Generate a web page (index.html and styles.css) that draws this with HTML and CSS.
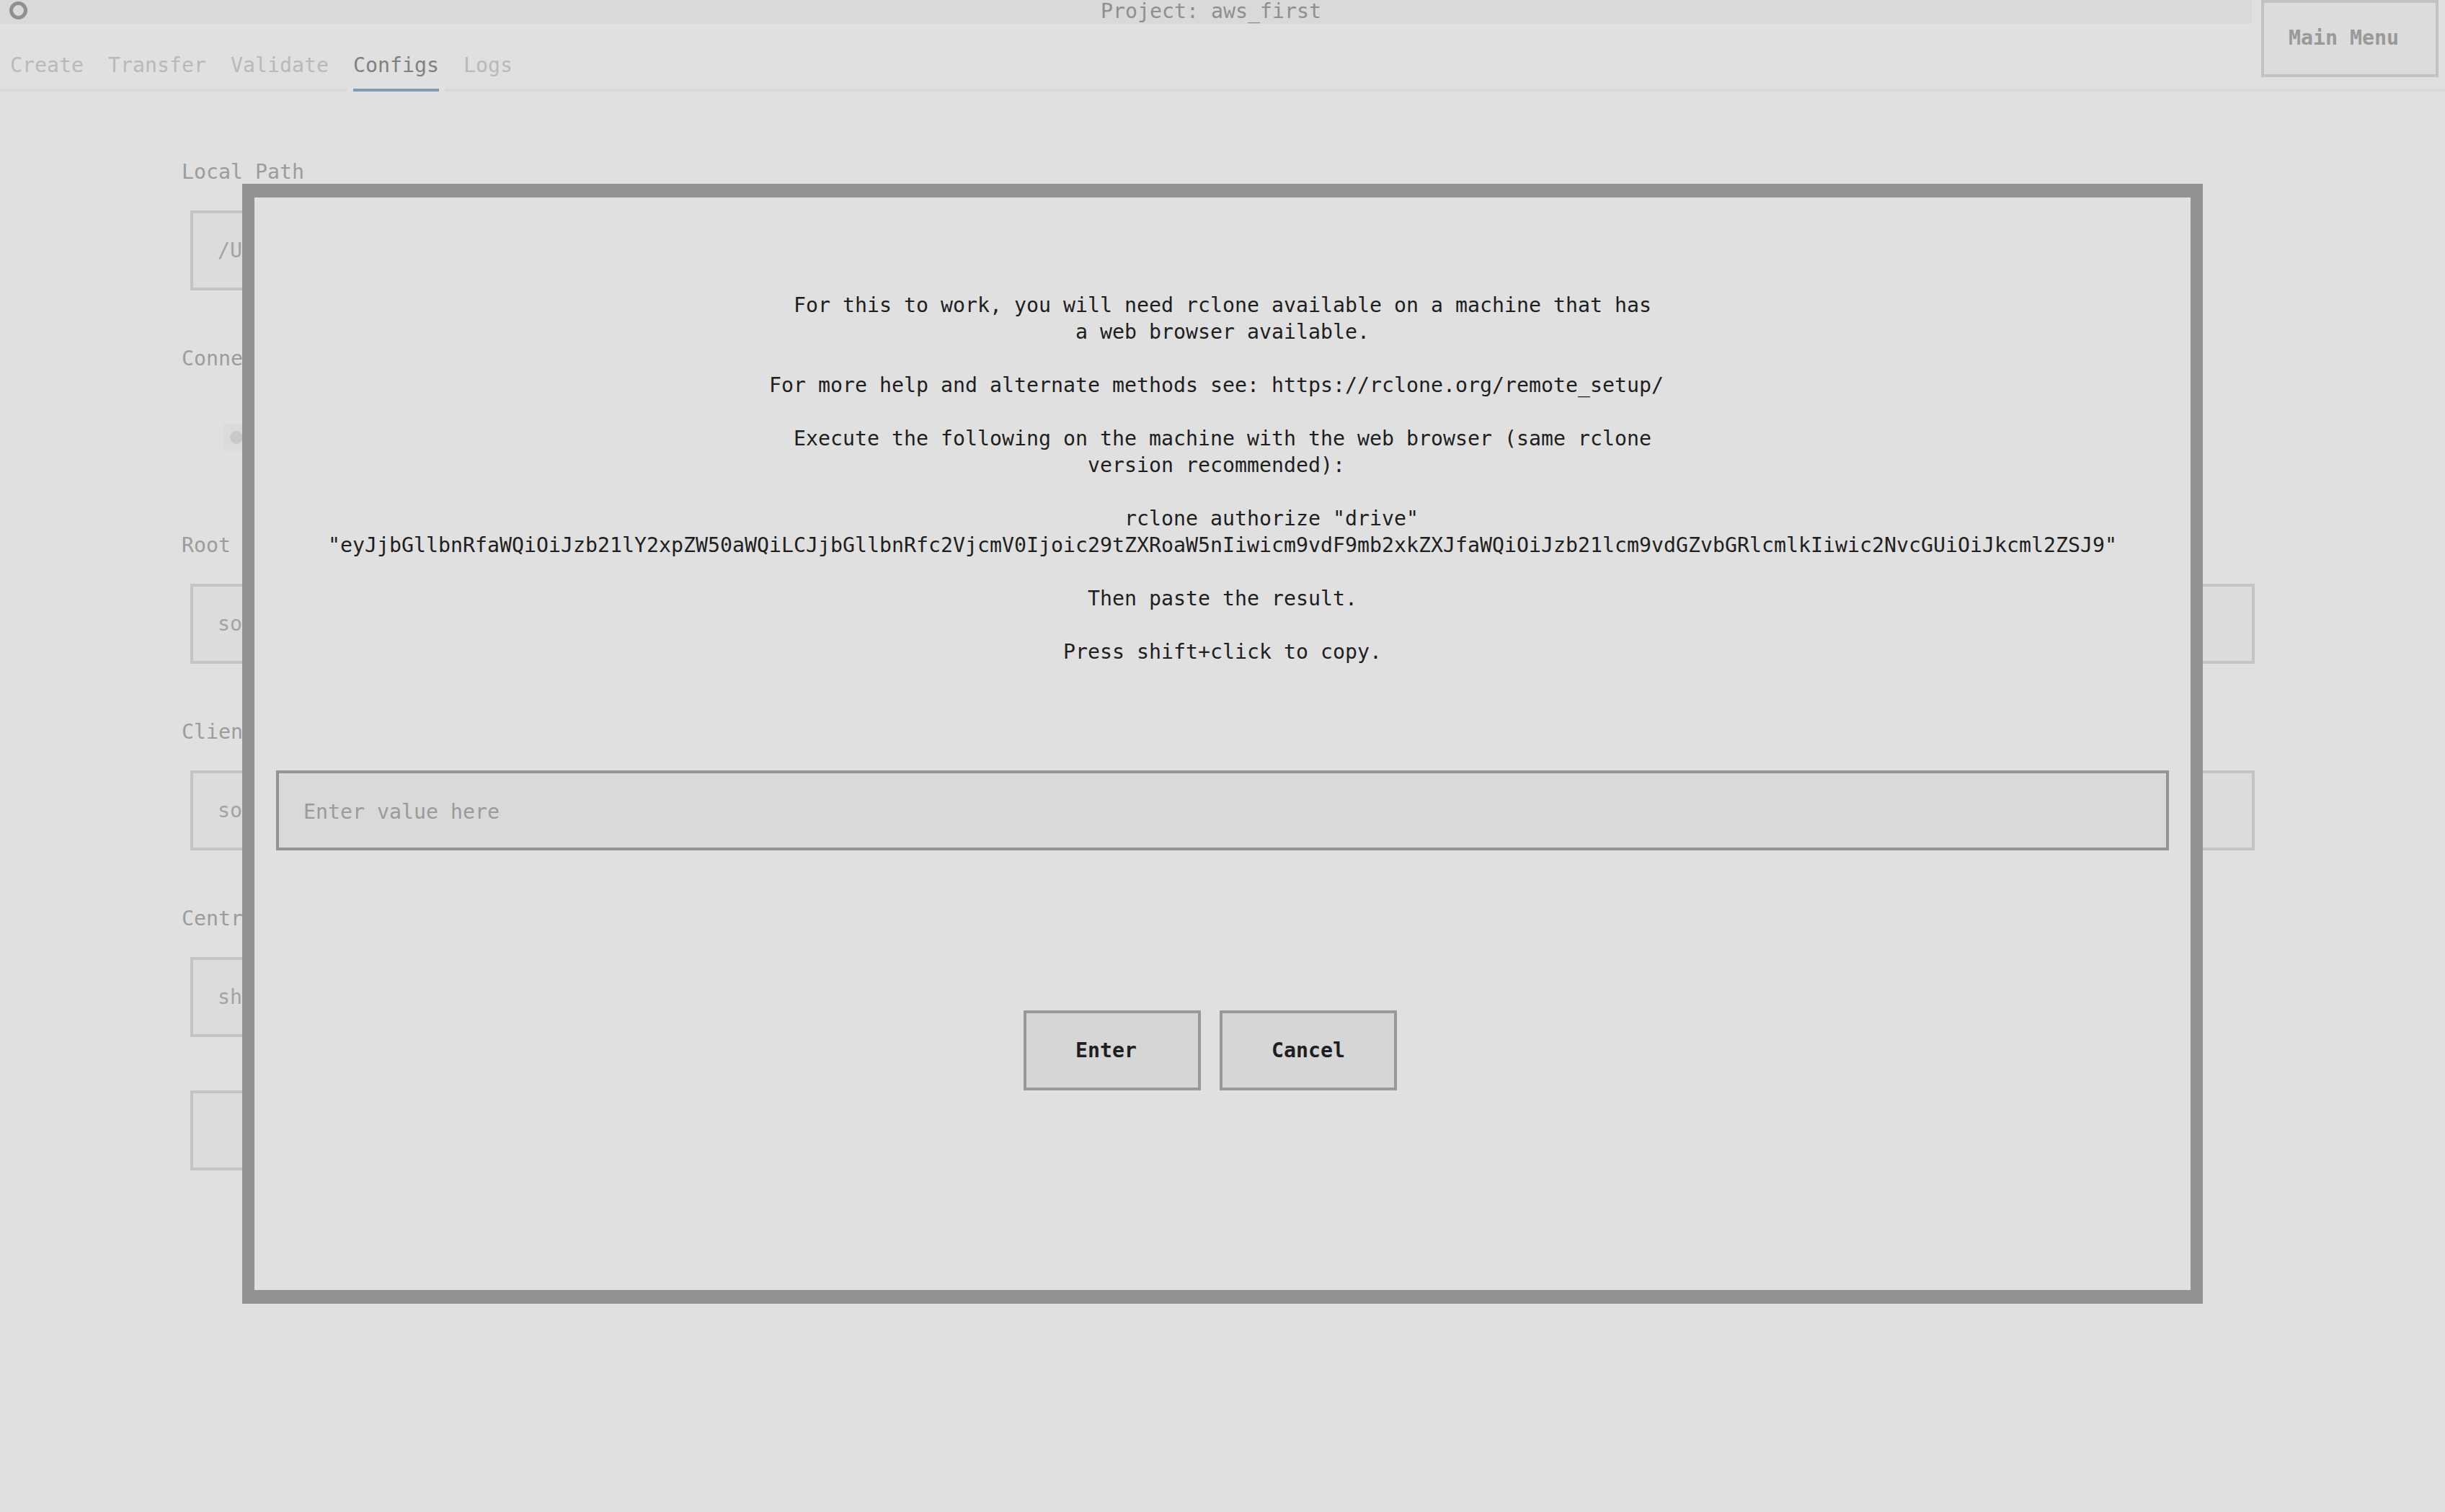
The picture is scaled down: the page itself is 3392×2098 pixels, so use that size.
FILE: index.html
```
<!DOCTYPE html>
<html lang="en">
<head>
<meta charset="utf-8">
<title>Project: aws_first</title>
<link rel="stylesheet" href="styles.css">
</head>
<body>
<div class="app">
  <div class="top">
    <div class="top-left">
      <div class="header">
        <span class="header-icon"></span>
        <div class="header-title">Project: aws_first</div>
      </div>
      <div class="tabs">
        <div class="tab">Create</div>
        <div class="tab">Transfer</div>
        <div class="tab">Validate</div>
        <div class="tab tab-active">Configs</div>
        <div class="tab">Logs</div>
      </div>
    </div>
    <button class="btn btn-menu btn-odd">Main Menu</button>
  </div>

  <div class="form">
    <div class="field">
      <div class="label">Local Path</div>
      <div class="box box-short">/U</div>
    </div>
    <div class="field field-radio">
      <div class="label">Conne</div>
      <div class="radio"><span class="radio-dot"></span></div>
    </div>
    <div class="field">
      <div class="label">Root</div>
      <div class="box">so</div>
    </div>
    <div class="field">
      <div class="label">Clien</div>
      <div class="box">so</div>
    </div>
    <div class="field">
      <div class="label">Centr</div>
      <div class="box box-short">sh</div>
    </div>
    <div class="field">
      <div class="box box-short"></div>
    </div>
  </div>

  <div class="modal">
    <div class="modal-text">For this to work, you will need rclone available on a machine that has
a web browser available.

For more help and alternate methods see: https://rclone.org/remote_setup/<span class="odd-pad"></span>

Execute the following on the machine with the web browser (same rclone
version recommended):<span class="odd-pad"></span>

&#9;rclone authorize "drive" "eyJjbGllbnRfaWQiOiJzb21lY2xpZW50aWQiLCJjbGllbnRfc2VjcmV0Ijoic29tZXRoaW5nIiwicm9vdF9mb2xkZXJfaWQiOiJzb21lcm9vdGZvbGRlcmlkIiwic2NvcGUiOiJkcml2ZSJ9"

Then paste the result.</div>
    <div class="modal-hint">Press shift+click to copy.</div>
    <input class="value-input" type="text" placeholder="Enter value here">
    <div class="modal-buttons">
      <button class="btn btn-dialog btn-odd">Enter</button>
      <button class="btn btn-dialog">Cancel</button>
    </div>
  </div>
</div>
</body>
</html>
```
FILE: styles.css
```
html, body {
  margin: 0;
  padding: 0;
}
body {
  width: 3392px;
  height: 2098px;
  overflow: hidden;
  background: #e0e0e0;
  font-family: "DejaVu Sans Mono", "Liberation Mono", monospace;
  font-size: 28.24px;
  line-height: 37px;
}
.app {
  position: relative;
  width: 3392px;
  height: 2098px;
}

/* top area */
.top {
  display: flex;
  align-items: flex-start;
  height: 127px;
  box-sizing: border-box;
  border-bottom: 4px solid #d8d8d8;
}
.top-left {
  width: 3124px;
  display: flex;
  flex-direction: column;
}
.header {
  height: 33px;
  background: #d9d9d9;
  display: flex;
  align-items: flex-start;
}
.header-icon {
  width: 25px;
  height: 25px;
  box-sizing: border-box;
  border: 5px solid #8f8f8f;
  border-radius: 50%;
  margin: 2px 0 0 13px;
  flex: none;
}
.header-title {
  flex: 1;
  text-align: center;
  padding-left: 198px;
  line-height: 31px;
  color: #8f8f8f;
}
.tabs {
  display: flex;
  gap: 34px;
  padding: 39px 0 0 14px;
  height: 90px;
  box-sizing: border-box;
}
.tab {
  position: relative;
  color: #b9b9b9;
}
.tab-active {
  color: #808080;
}
.tab-active::after {
  content: "";
  position: absolute;
  left: -8px;
  right: -8px;
  top: 51px;
  height: 4px;
  background: #809cb4;
  border-left: 8px solid #e0e0e0;
  border-right: 8px solid #e0e0e0;
}

.btn {
  font-family: "DejaVu Sans Mono", "Liberation Mono", monospace;
  font-size: 28.24px;
  line-height: 37px;
  font-weight: bold;
  box-sizing: border-box;
  padding: 0;
  margin: 0;
  cursor: pointer;
}
.btn-menu {
  width: 246px;
  height: 107px;
  margin-left: 13px;
  border: 4px solid #c2c2c2;
  background: #dcdcdc;
  color: #999999;
  padding-bottom: 2px;
}
.btn-odd {
  padding-right: 17px;
}

/* background form (behind the dialog) */
.form {
  display: flex;
  flex-direction: column;
  gap: 74px;
  padding: 91px 0 0 252px;
}
.field {
  display: flex;
  flex-direction: column;
}
.label {
  color: #9c9c9c;
  padding-top: 2px;
  margin-bottom: 35px;
}
.box {
  margin-left: 12px;
  width: 2864px;
  height: 111px;
  box-sizing: border-box;
  border: 4px solid #c4c4c4;
  background: #dcdcdc;
  color: #a3a3a3;
  padding-left: 34px;
  display: flex;
  align-items: center;
}
.box-short {
  width: 2600px;
}
.field-radio {
  margin-bottom: 37px;
}
.field-radio .label {
  margin-bottom: 72px;
}
.radio {
  margin-left: 58px;
  height: 37px;
  width: 420px;
  background: #dbdbdb;
  display: flex;
  align-items: center;
}
.radio-dot {
  width: 18px;
  height: 18px;
  border-radius: 50%;
  background: #c8c8c8;
  margin-left: 9px;
}

/* modal dialog */
.modal {
  position: absolute;
  left: 336px;
  top: 255px;
  width: 2720px;
  height: 1554px;
  box-sizing: border-box;
  border-style: solid;
  border-color: #929292;
  border-width: 19px 17px;
  background: #e0e0e0;
  padding: 131px 30px 0 30px;
  display: flex;
  flex-direction: column;
}
.modal-text {
  white-space: pre-wrap;
  tab-size: 8;
  text-align: center;
  color: #1f1f1f;
}
.odd-pad {
  display: inline-block;
  width: 17px;
}
.modal-hint {
  margin-top: 37px;
  text-align: center;
  color: #1f1f1f;
}
.value-input {
  margin: 146px 0 0 0;
  width: 100%;
  height: 111px;
  box-sizing: border-box;
  border: 4px solid #939393;
  background: #d9d9d9;
  padding: 4px 0 0 34px;
  font-family: "DejaVu Sans Mono", "Liberation Mono", monospace;
  font-size: 28.24px;
  color: #1f1f1f;
  outline: none;
}
.value-input::placeholder {
  color: #9b9b9b;
  opacity: 1;
}
.modal-buttons {
  margin-top: 222px;
  display: flex;
  justify-content: center;
  gap: 26px;
  padding-right: 34px;
}
.btn-dialog {
  width: 246px;
  height: 111px;
  border: 4px solid #999999;
  background: #d6d6d6;
  color: #1f1f1f;
}
```
